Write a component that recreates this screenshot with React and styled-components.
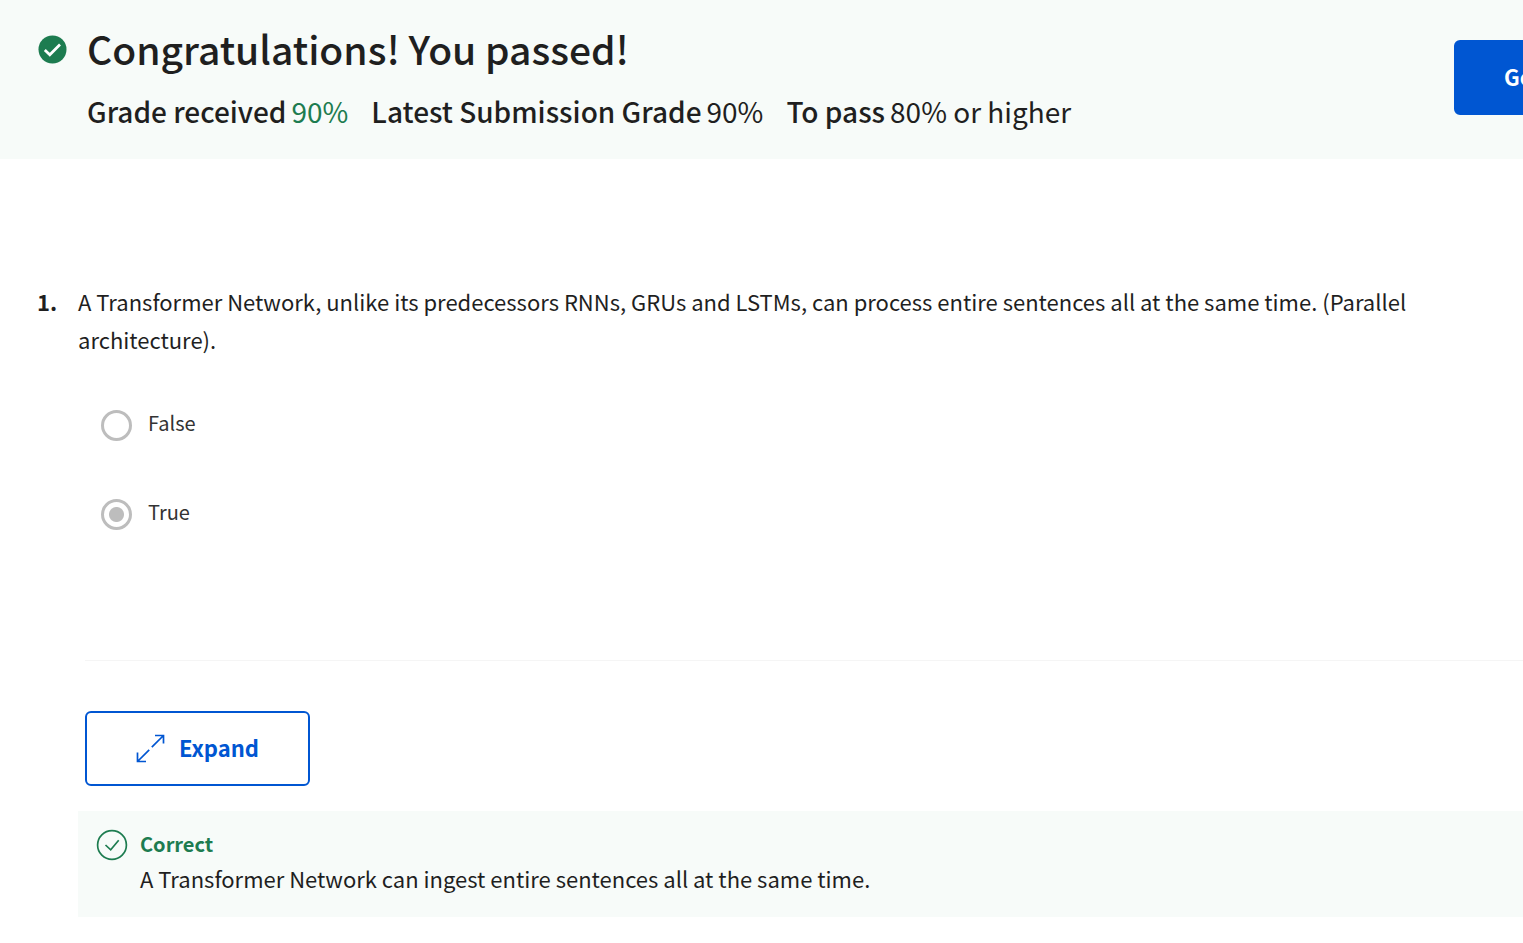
import React from "react";
import styled, { createGlobalStyle } from "styled-components";

const Global = createGlobalStyle`
  *, *::before, *::after { box-sizing: border-box; }
  body {
    margin: 0;
    background: #fff;
    color: #1f1f1f;
    font-family: "Noto Sans CJK SC", "Noto Sans", sans-serif;
    overflow-x: hidden;
  }
  h1, h2, p, dl, dd, ol, fieldset { margin: 0; padding: 0; }
`;

const Banner = styled.header`
  display: flex;
  align-items: flex-start;
  padding: 22px 0 28px 38px;
  background: #f7fbf9;
  overflow: hidden;
`;

const StatusIcon = styled.svg`
  flex: none;
  width: 29px;
  height: 29px;
  margin: 13px 20px 0 0;
`;

const Summary = styled.div`
  flex: 1;
  min-width: 0;
`;

const Title = styled.h1`
  font-size: 39px;
  line-height: 52px;
  font-weight: 500;
  white-space: nowrap;
`;

const Grades = styled.dl`
  display: flex;
  gap: 23px;
  margin-top: 17px;
  font-size: 28px;
  line-height: 40px;
  white-space: nowrap;
`;

const Grade = styled.div`
  display: flex;
  gap: 5px;
`;

const GradeName = styled.dt`
  font-weight: 500;
`;

const GradeValue = styled.dd`
  color: ${(p) => (p.$passed ? "#1d7c50" : "inherit")};
`;

const Button = styled.button`
  flex: none;
  display: flex;
  align-items: center;
  height: 75px;
  border: 2px solid #0056d2;
  border-radius: 6px;
  background: ${(p) => (p.$primary ? "#0056d2" : "#fff")};
  color: ${(p) => (p.$primary ? "#fff" : "#0056d2")};
  font: 700 22px/32px "Noto Sans CJK SC", sans-serif;
  white-space: nowrap;
`;

const ButtonLabel = styled.span`
  padding-bottom: 4px;
`;

const NextButton = styled(Button)`
  width: 220px;
  margin: 18px -151px 0 0;
  padding: 0 0 0 48px;
`;

const Questions = styled.ol`
  list-style: none;
  padding: 123px 0 26px 37px;
`;

const Question = styled.li`
  display: flex;
`;

const Marker = styled.span`
  flex: none;
  width: 41px;
  font-size: 22px;
  line-height: 38px;
  font-weight: 700;
`;

const QuestionBody = styled.div`
  flex: 1;
  min-width: 0;
`;

const Prompt = styled.p`
  padding-right: 80px;
  font-size: 22px;
  line-height: 38px;
`;

const Options = styled.fieldset`
  display: flex;
  flex-direction: column;
  gap: 57px;
  min-width: 0;
  padding: 51px 0 0 23px;
  border: 0;
`;

const Option = styled.label`
  display: flex;
  align-items: center;
  gap: 16px;
  height: 32px;
  color: #333;
  font-size: 20px;
  line-height: 28px;
`;

const OptionText = styled.span`
  padding-bottom: 4px;
`;

const Radio = styled.input`
  appearance: none;
  flex: none;
  width: 31px;
  height: 31px;
  margin: 0;
  border: 3px solid #bdbdbd;
  border-radius: 50%;
  background: #fff;
  &:checked {
    background: radial-gradient(circle, #bdbdbd 7px, #fff 8px);
  }
`;

const Divider = styled.hr`
  height: 1px;
  margin: 130px 0 50px 7px;
  border: 0;
  background: #f5f5f5;
`;

const ExpandButton = styled(Button)`
  justify-content: center;
  gap: 14px;
  width: 225px;
  margin: 0 0 25px 7px;
`;

const Feedback = styled.section`
  display: flex;
  gap: 12px;
  padding: 16px 18px 22px;
  background: #f7fbf9;
`;

const Verdict = styled.h2`
  font-size: 20px;
  line-height: 34px;
  font-weight: 700;
  color: #1d7c50;
`;

const Explanation = styled.p`
  font-size: 22px;
  line-height: 34px;
`;

export default function App() {
  return (
    <>
      <Global />
      <Banner>
        <StatusIcon viewBox="0 0 29 29" aria-hidden="true">
          <circle cx="14.5" cy="14.5" r="14" fill="#1d7c50" />
          <path d="M6.8 15l5 4.8L22 9.5" fill="none" stroke="#fff" strokeWidth="2.7" />
        </StatusIcon>
        <Summary>
          <Title>Congratulations! You passed!</Title>
          <Grades>
            <Grade><GradeName>Grade received</GradeName><GradeValue $passed>90%</GradeValue></Grade>
            <Grade><GradeName>Latest Submission Grade</GradeName><GradeValue>90%</GradeValue></Grade>
            <Grade><GradeName>To pass</GradeName><GradeValue>80% or higher</GradeValue></Grade>
          </Grades>
        </Summary>
        <NextButton $primary><ButtonLabel>Go to next item</ButtonLabel></NextButton>
      </Banner>
      <Questions>
        <Question>
          <Marker>1.</Marker>
          <QuestionBody>
            <Prompt>
              A Transformer Network, unlike its predecessors RNNs, GRUs and LSTMs, can process entire sentences all at the same time. (Parallel architecture).
            </Prompt>
            <Options>
              <Option><Radio type="radio" name="q1" /><OptionText>False</OptionText></Option>
              <Option><Radio type="radio" name="q1" defaultChecked /><OptionText>True</OptionText></Option>
            </Options>
            <Divider />
            <ExpandButton>
              <svg width="29" height="29" viewBox="0 0 29 29" fill="none" stroke="#0056d2" strokeWidth="1.7" aria-hidden="true">
                <path d="M19 1.5h8.5v8M27.5 1.5L15.8 13.2M1.5 18.5v9h8.5M1.5 27.5l11.7-11.7" />
              </svg>
              <ButtonLabel>Expand</ButtonLabel>
            </ExpandButton>
            <Feedback>
              <svg width="32" height="36" viewBox="0 0 32 36" fill="none" stroke="#1d7c50" strokeWidth="1.7" aria-hidden="true">
                <circle cx="16" cy="18" r="14.4" />
                <path d="M9.5 18l5.2 4.8 8-9.5" />
              </svg>
              <div>
                <Verdict>Correct</Verdict>
                <Explanation>A Transformer Network can ingest entire sentences all at the same time.</Explanation>
              </div>
            </Feedback>
          </QuestionBody>
        </Question>
      </Questions>
    </>
  );
}
